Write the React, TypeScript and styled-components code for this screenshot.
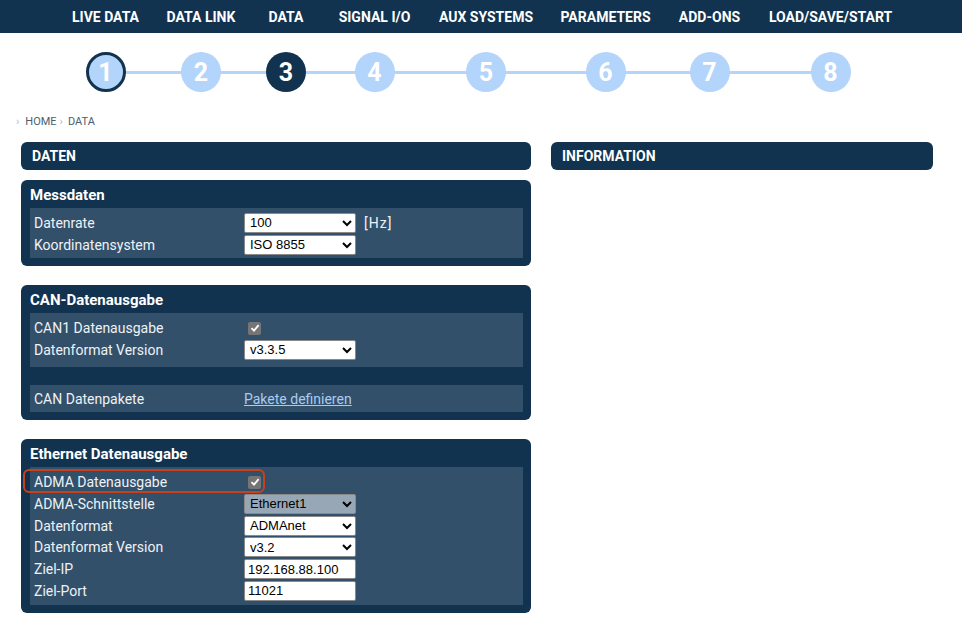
import React from "react";
import styled, { createGlobalStyle } from "styled-components";

const NAVY = "#11334f";
const ROW = "#33506a";
const LIGHT = "#b3d4fb";

const GlobalStyle = createGlobalStyle`
  html, body {
    margin: 0;
    padding: 0;
    background: #ffffff;
    font-family: Roboto, "Liberation Sans", sans-serif;
  }
`;

const steps = [
  { label: "LIVE DATA", width: 95 },
  { label: "DATA LINK", width: 96 },
  { label: "DATA", width: 74 },
  { label: "SIGNAL I/O", width: 103 },
  { label: "AUX SYSTEMS", width: 120 },
  { label: "PARAMETERS", width: 119 },
  { label: "ADD-ONS", width: 89 },
  { label: "LOAD/SAVE/START", width: 153 },
];

const columns = steps.map((s) => `${s.width}px`).join(" ");

export default function App() {
  return (
    <Page>
      <GlobalStyle />
      <NavBar>
        <NavGrid>
          {steps.map((s) => (
            <NavItem key={s.label}>{s.label}</NavItem>
          ))}
        </NavGrid>
      </NavBar>

      <Stepper>
        <NavGrid>
          {steps.map((s, i) => (
            <StepCell key={s.label} $first={i === 0} $last={i === steps.length - 1}>
              <Circle $state={i === 0 ? "visited" : i === 2 ? "active" : "idle"}>{i + 1}</Circle>
            </StepCell>
          ))}
        </NavGrid>
      </Stepper>

      <Crumbs>
        <CrumbSep>›</CrumbSep>HOME<CrumbSep>›</CrumbSep>DATA
      </Crumbs>

      <Main>
        <Column $width={510}>
          <Header>DATEN</Header>

          <Card>
            <CardTitle>Messdaten</CardTitle>
            <Rows>
              <Row>
                <Label>Datenrate</Label>
                <Select defaultValue="100">
                  <option>100</option>
                </Select>
                <Unit>[Hz]</Unit>
              </Row>
              <Row>
                <Label>Koordinatensystem</Label>
                <Select defaultValue="ISO 8855">
                  <option>ISO 8855</option>
                </Select>
              </Row>
            </Rows>
          </Card>

          <Card>
            <CardTitle>CAN-Datenausgabe</CardTitle>
            <Rows $bottom={6}>
              <Row>
                <Label>CAN1 Datenausgabe</Label>
                <Check />
              </Row>
              <Row>
                <Label>Datenformat Version</Label>
                <Select defaultValue="v3.3.5">
                  <option>v3.3.5</option>
                </Select>
              </Row>
            </Rows>
            <Spacer />
            <Rows $top={3}>
              <Row>
                <Label>CAN Datenpakete</Label>
                <Link href="#">Pakete definieren</Link>
              </Row>
            </Rows>
          </Card>

          <Card>
            <CardTitle>Ethernet Datenausgabe</CardTitle>
            <Rows>
              <Row>
                <Highlight />
                <Label>ADMA Datenausgabe</Label>
                <Check />
              </Row>
              <Row>
                <Label>ADMA-Schnittstelle</Label>
                <Select defaultValue="Ethernet1" $disabled>
                  <option>Ethernet1</option>
                </Select>
              </Row>
              <Row>
                <Label>Datenformat</Label>
                <Select defaultValue="ADMAnet">
                  <option>ADMAnet</option>
                </Select>
              </Row>
              <Row>
                <Label>Datenformat Version</Label>
                <Select defaultValue="v3.2">
                  <option>v3.2</option>
                </Select>
              </Row>
              <Row>
                <Label>Ziel-IP</Label>
                <TextInput defaultValue="192.168.88.100" />
              </Row>
              <Row>
                <Label>Ziel-Port</Label>
                <TextInput defaultValue="11021" />
              </Row>
            </Rows>
          </Card>
        </Column>

        <Column $width={382}>
          <Header>INFORMATION</Header>
        </Column>
      </Main>
    </Page>
  );
}

function Check() {
  return (
    <CheckBox>
      <svg width="10" height="10" viewBox="0 0 10 10">
        <path d="M1.5 5.2 L4 7.6 L8.6 2.2" fill="none" stroke="#fff" strokeWidth="1.8" />
      </svg>
    </CheckBox>
  );
}

const Page = styled.div`
  width: 962px;
  min-height: 623px;
`;

const NavBar = styled.nav`
  background: ${NAVY};
  height: 33px;
  display: flex;
  justify-content: center;
`;

const NavGrid = styled.div`
  display: grid;
  grid-template-columns: ${columns};
  margin-left: 3px;
`;

const NavItem = styled.div`
  color: #fff;
  font-weight: 700;
  font-size: 14px;
  display: flex;
  align-items: center;
  justify-content: center;
  height: 33px;
  white-space: nowrap;
`;

const Stepper = styled.div`
  display: flex;
  justify-content: center;
  padding: 19px 0 0;
  height: 52px;
`;

const StepCell = styled.div<{ $first: boolean; $last: boolean }>`
  position: relative;
  display: flex;
  justify-content: center;
  align-items: center;
  height: 40px;

  &::before,
  &::after {
    content: "";
    position: absolute;
    top: 19px;
    height: 3px;
    background: ${LIGHT};
    width: 50%;
  }
  &::before {
    left: 0;
    display: ${(p) => (p.$first ? "none" : "block")};
  }
  &::after {
    right: 0;
    display: ${(p) => (p.$last ? "none" : "block")};
  }
`;

const Circle = styled.div<{ $state: "visited" | "active" | "idle" }>`
  position: relative;
  z-index: 1;
  box-sizing: border-box;
  width: 40px;
  height: 40px;
  border-radius: 50%;
  display: flex;
  align-items: center;
  justify-content: center;
  color: #fff;
  font-size: 25px;
  font-weight: 700;
  background: ${(p) => (p.$state === "active" ? NAVY : LIGHT)};
  border: ${(p) => (p.$state === "visited" ? `3px solid ${NAVY}` : "none")};
`;

const Crumbs = styled.div`
  padding: 7px 0 0 16px;
  height: 20px;
  font-size: 11px;
  color: #4d5d6e;
  display: flex;
  align-items: center;
`;

const CrumbSep = styled.span`
  color: #a9bccd;
  margin-right: 5px;
  margin-left: 3px;
  &:first-child {
    margin-left: 0;
    margin-right: 6px;
  }
`;

const Main = styled.div`
  display: flex;
  gap: 20px;
  padding: 11px 0 0 21px;
  align-items: flex-start;
`;

const Column = styled.div<{ $width: number }>`
  width: ${(p) => p.$width}px;
  display: flex;
  flex-direction: column;
`;

const Header = styled.div`
  background: ${NAVY};
  border-radius: 6px;
  height: 28px;
  display: flex;
  align-items: center;
  padding-left: 11px;
  color: #fff;
  font-weight: 700;
  font-size: 14px;
  margin-bottom: 10px;
`;

const Card = styled.section`
  background: ${NAVY};
  border-radius: 6px;
  padding: 0 8px 8px 9px;
  margin-bottom: 19px;
`;

const CardTitle = styled.h3`
  margin: 0;
  height: 28px;
  display: flex;
  align-items: center;
  padding-top: 2px;
  box-sizing: border-box;
  color: #fff;
  font-size: 15px;
  font-weight: 700;
`;

const Rows = styled.div<{ $top?: number; $bottom?: number }>`
  background: ${ROW};
  padding: ${(p) => p.$top ?? 4}px 4px ${(p) => p.$bottom ?? 3}px;
`;

const Spacer = styled.div`
  height: 18px;
`;

const Row = styled.div`
  position: relative;
  display: grid;
  grid-template-columns: 210px 112px auto;
  align-items: center;
  height: 21.7px;
`;

const Label = styled.span`
  color: #eef2f6;
  font-size: 14px;
  white-space: nowrap;
`;

const Select = styled.select<{ $disabled?: boolean }>`
  width: 112px;
  height: 20px;
  box-sizing: border-box;
  font-family: "Liberation Sans", Arial, sans-serif;
  font-size: 13px;
  color: #000;
  background: ${(p) => (p.$disabled ? "#98a7b5" : "#fff")};
  border: 1px solid #8a8a8a;
  border-radius: 2px;
  padding: 0 1px;
`;

const TextInput = styled.input`
  width: 112px;
  height: 20px;
  box-sizing: border-box;
  font-family: "Liberation Sans", Arial, sans-serif;
  font-size: 13px;
  color: #000;
  background: #fff;
  border: 1px solid #8a8a8a;
  border-radius: 2px;
  padding: 0 3px;
`;

const Unit = styled.span`
  color: #eef2f6;
  font-size: 14px;
  margin-left: 8px;
  letter-spacing: 1px;
`;

const CheckBox = styled.span`
  margin-left: 4px;
  width: 13px;
  height: 13px;
  border-radius: 2px;
  background: #757575;
  display: flex;
  align-items: center;
  justify-content: center;
`;

const Link = styled.a`
  color: #a9cbf0;
  font-size: 14px;
  text-decoration: underline;
  white-space: nowrap;
`;

const Highlight = styled.div`
  position: absolute;
  left: -11px;
  top: -2px;
  width: 242px;
  height: 24px;
  box-sizing: border-box;
  border: 2px solid #c9401c;
  border-radius: 6px;
  pointer-events: none;
`;
